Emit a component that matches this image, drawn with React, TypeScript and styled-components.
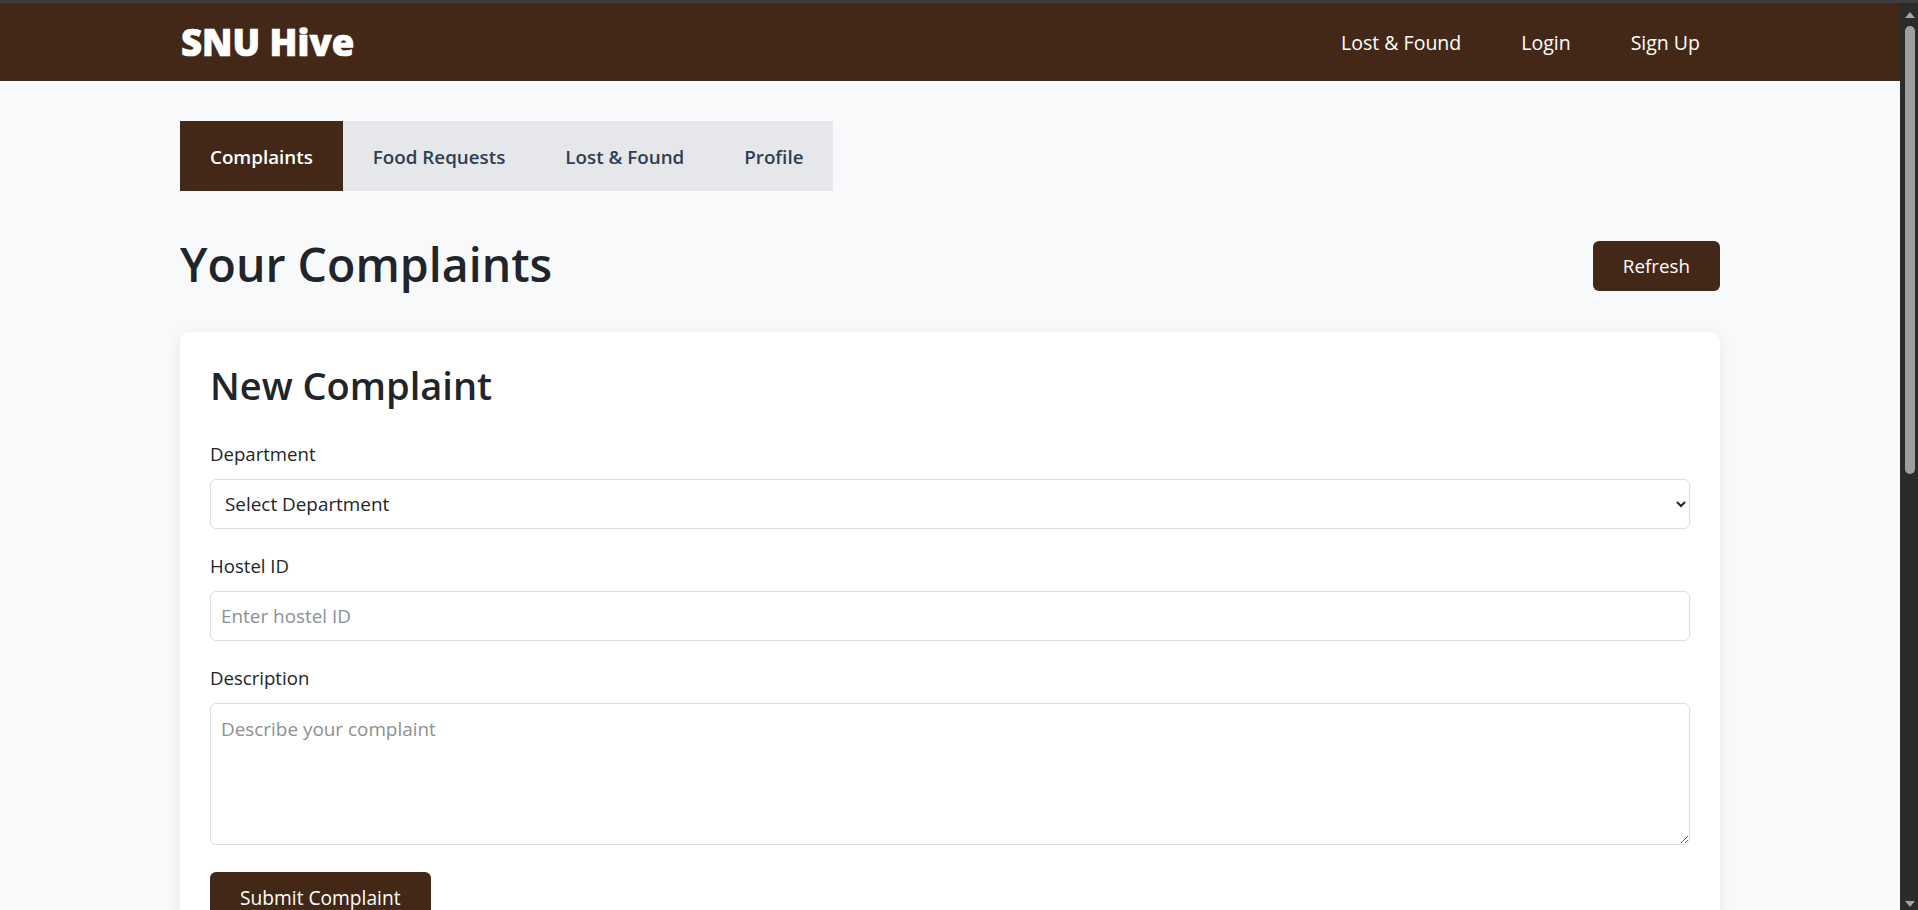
import React from "react";
import styled, { createGlobalStyle } from "styled-components";

const brown = "#432818";

const GlobalStyle = createGlobalStyle`
  * { box-sizing: border-box; }
  html, body { margin: 0; padding: 0; }
  body {
    background: #f8f9fa;
    color: #212529;
    font-family: "Segoe UI", "Open Sans", "Noto Sans", sans-serif;
    border-top: 3px solid #3a3d42;
    padding-right: 18px;
  }
`;

/* Window scrollbar, drawn over the right page edge */
const ScrollBar = styled.div`
  position: fixed;
  top: 3px;
  right: 0;
  bottom: 0;
  width: 18px;
  background: #2b2b2b;
  display: flex;
  flex-direction: column;
  align-items: center;
  padding: 9px 0 3px 1px;
  z-index: 10;
`;

const Arrow = styled.span<{ $down?: boolean }>`
  width: 0;
  height: 0;
  border-left: 5px solid transparent;
  border-right: 5px solid transparent;
  ${(p) =>
    p.$down
      ? "border-top: 6px solid #a3a3a3; margin-top: auto;"
      : "border-bottom: 6px solid #a3a3a3;"}
`;

const Thumb = styled.span`
  width: 10px;
  height: 448px;
  margin-top: 8px;
  background: #9f9f9f;
  border-radius: 5px;
`;

const NavBar = styled.header`
  background: ${brown};
  height: 78px;
`;

const Container = styled.div`
  width: 1540px;
  margin: 0 auto;
`;

const NavInner = styled(Container)`
  height: 100%;
  display: flex;
  align-items: center;
  justify-content: space-between;
`;

const Logo = styled.div`
  color: #fff;
  font-size: 36.5px;
  font-weight: 800;
  -webkit-text-stroke: 0.7px #fff;
  padding-left: 1px;
  padding-bottom: 1px;
`;

const NavLinks = styled.nav`
  display: flex;
  gap: 20px;
`;

const NavLink = styled.a`
  color: #fff;
  text-decoration: none;
  font-size: 19.5px;
  padding: 6px 20px;
`;

const Main = styled(Container)`
  padding-top: 40px;
  padding-bottom: 40px;
`;

const Tabs = styled.div`
  display: inline-flex;
  background: #e5e7eb;
`;

const Tab = styled.button<{ $active?: boolean }>`
  height: 70px;
  padding: 2px 30px 0;
  border: none;
  font-family: inherit;
  font-size: 18.8px;
  font-weight: 600;
  cursor: pointer;
  background: ${(p) => (p.$active ? brown : "transparent")};
  color: ${(p) => (p.$active ? "#fff" : "#2f3e52")};
`;

const HeaderRow = styled.div`
  display: flex;
  align-items: center;
  justify-content: space-between;
  margin-top: 44px;
  margin-bottom: 35px;
`;

const PageTitle = styled.h1`
  margin: 0;
  font-size: 46.5px;
  font-weight: 600;
  line-height: 58px;
  padding-bottom: 4px;
`;

const PrimaryButton = styled.button<{ $size?: number }>`
  background: ${brown};
  color: #fff;
  border: none;
  border-radius: 6px;
  height: 50px;
  padding: 0 30px;
  font-family: inherit;
  font-size: ${(p) => p.$size ?? 18.8}px;
  cursor: pointer;
`;

const Card = styled.section`
  background: #fff;
  border-radius: 10px;
  box-shadow: 0 4px 14px rgba(0, 0, 0, 0.08);
  padding: 30px;
`;

const CardTitle = styled.h2`
  margin: 0 0 32px;
  font-size: 38px;
  font-weight: 600;
  line-height: 46px;
`;

const Field = styled.div`
  margin-bottom: 23px;
`;

const Label = styled.label`
  display: block;
  font-size: 18.6px;
  line-height: 27px;
  margin-bottom: 12px;
`;

const inputBase = `
  width: 100%;
  border: 1px solid #dcdde0;
  border-radius: 6px;
  background: #fff;
  font-family: inherit;
  font-size: 18.9px;
  color: #212529;
  padding: 0 10px;
  outline: none;
  &::placeholder { color: #8d9095; }
`;

const Select = styled.select`
  ${inputBase}
  height: 50px;
`;

const Input = styled.input`
  ${inputBase}
  height: 50px;
`;

const TextArea = styled.textarea`
  ${inputBase}
  display: block;
  height: 142px;
  padding: 12px 10px 10px;
  line-height: 27px;
  resize: vertical;
`;

const SubmitButton = styled(PrimaryButton)`
  margin-top: 4px;
`;

export default function App() {
  return (
    <>
      <GlobalStyle />
      <ScrollBar aria-hidden>
        <Arrow />
        <Thumb />
        <Arrow $down />
      </ScrollBar>
      <NavBar>
        <NavInner>
          <Logo>SNU Hive</Logo>
          <NavLinks>
            <NavLink href="#">Lost &amp; Found</NavLink>
            <NavLink href="#">Login</NavLink>
            <NavLink href="#">Sign Up</NavLink>
          </NavLinks>
        </NavInner>
      </NavBar>
      <Main>
        <Tabs>
          <Tab $active>Complaints</Tab>
          <Tab>Food Requests</Tab>
          <Tab>Lost &amp; Found</Tab>
          <Tab>Profile</Tab>
        </Tabs>
        <HeaderRow>
          <PageTitle>Your Complaints</PageTitle>
          <PrimaryButton>Refresh</PrimaryButton>
        </HeaderRow>
        <Card>
          <CardTitle>New Complaint</CardTitle>
          <Field>
            <Label>Department</Label>
            <Select defaultValue="">
              <option value="">Select Department</option>
              <option value="mess">Mess</option>
              <option value="hostel">Hostel</option>
              <option value="maintenance">Maintenance</option>
            </Select>
          </Field>
          <Field>
            <Label>Hostel ID</Label>
            <Input placeholder="Enter hostel ID" />
          </Field>
          <Field>
            <Label>Description</Label>
            <TextArea placeholder="Describe your complaint" />
          </Field>
          <SubmitButton $size={19.2}>Submit Complaint</SubmitButton>
        </Card>
      </Main>
    </>
  );
}
